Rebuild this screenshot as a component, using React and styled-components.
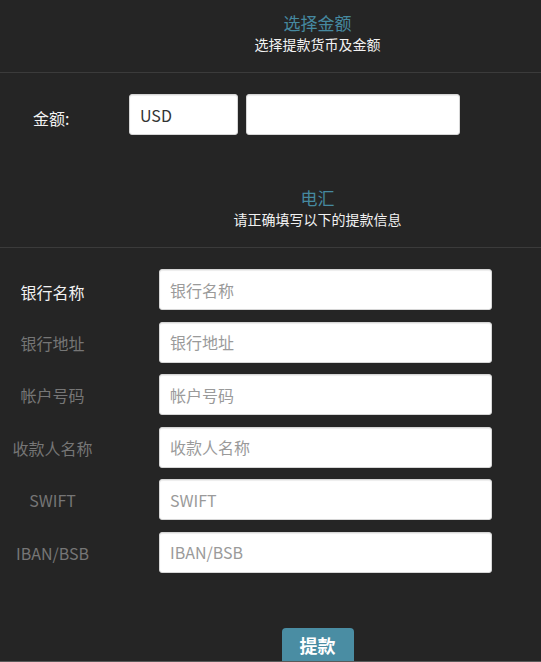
import React from 'react'
import styled, { createGlobalStyle } from 'styled-components'

const GlobalStyle = createGlobalStyle`
	html, body {
		margin: 0;
		padding: 0;
		background: #252525;
	}
	body {
		font-family: "Noto Sans CJK SC", "Open Sans", sans-serif;
		color: #fff;
	}
	* {
		box-sizing: border-box;
	}
`

const Page = styled.div`
	width: 541px;
	height: 662px;
	overflow: hidden;
	background: #252525;
`

const Header = styled.div`
	padding: ${({ top }) => top}px 0 ${({ bottom }) => bottom}px 94px;
	border-bottom: 1px solid #3b3b3b;
	text-align: center;
`

const Title = styled.div`
	font-size: 17px;
	line-height: 22px;
	color: #4689a0;
`

const Subtitle = styled.div`
	font-size: 14px;
	line-height: 20px;
	color: #f2f2f2;
`

const AmountRow = styled.div`
	display: flex;
	align-items: center;
	gap: 8px;
	padding: 21px 0 0 33px;
`

const AmountLabel = styled.label`
	width: 88px;
	padding-top: 6px;
	font-size: 16px;
	line-height: 22px;
	color: #f2f2f2;
`

const Input = styled.input`
	width: ${({ w }) => w}px;
	height: 41px;
	padding: 0 10px;
	border: 1px solid #d6d6d6;
	border-radius: 3px;
	background: #fff;
	box-shadow: inset 0 1px 1px rgba(0, 0, 0, 0.075);
	font-family: "Noto Sans CJK SC", "Open Sans", sans-serif;
	font-size: 16px;
	color: #333;
	outline: none;

	&::placeholder {
		color: #9a9a9a;
	}
`

const Fields = styled.div`
	display: grid;
	grid-template-columns: 105px 333px;
	column-gap: 54px;
	row-gap: 11.5px;
	padding-top: 21px;
	align-items: center;
`

const FieldLabel = styled.label`
	text-align: center;
	font-size: 16px;
	line-height: 22px;
	color: ${({ active }) => (active ? '#f2f2f2' : '#767676')};
	padding-top: ${({ active }) => (active ? 5 : 1)}px;
`

const Footer = styled.div`
	display: flex;
	justify-content: center;
	height: 89px;
	padding: 55px 0 0 94px;
	overflow: hidden;
	border-bottom: 1px solid #5a5a5a;
`

const SubmitButton = styled.button`
	width: 72px;
	height: 44px;
	padding: 0 0 10px;
	border: none;
	border-radius: 4px;
	background: #4a8da3;
	color: #fff;
	font-family: "Noto Sans CJK SC", sans-serif;
	font-size: 18px;
	font-weight: 700;
	cursor: pointer;
`

const fields = ['银行名称', '银行地址', '帐户号码', '收款人名称', 'SWIFT', 'IBAN/BSB']

const App = () => {
	return (
		<Page>
			<GlobalStyle />
			<Header top={12} bottom={18}>
				<Title>选择金额</Title>
				<Subtitle>选择提款货币及金额</Subtitle>
			</Header>
			<AmountRow>
				<AmountLabel>金额:</AmountLabel>
				<Input w={109} defaultValue='USD' readOnly />
				<Input w={214} />
			</AmountRow>
			<Header top={52} bottom={18}>
				<Title>电汇</Title>
				<Subtitle>请正确填写以下的提款信息</Subtitle>
			</Header>
			<Fields>
				{fields.map((name, i) => (
					<React.Fragment key={name}>
						<FieldLabel active={i === 0}>{name}</FieldLabel>
						<Input w={333} placeholder={name} />
					</React.Fragment>
				))}
			</Fields>
			<Footer>
				<SubmitButton>提款</SubmitButton>
			</Footer>
		</Page>
	)
}

export default App
